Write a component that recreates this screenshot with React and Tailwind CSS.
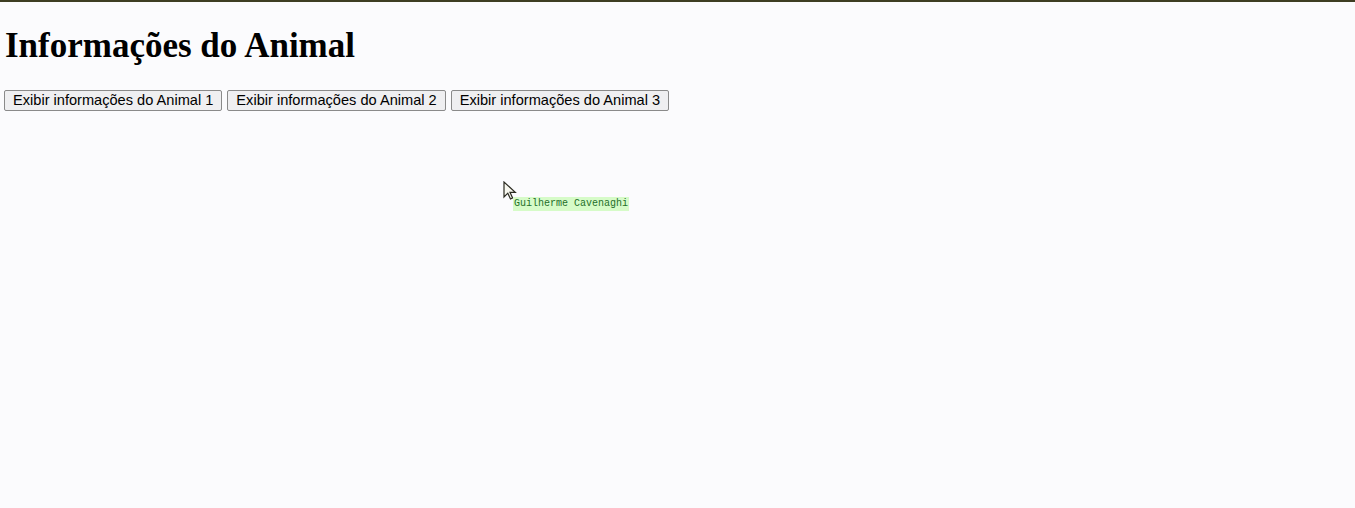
import React from 'react';

const animals = [1, 2, 3];

const Cursor = () => (
    <svg width="14" height="20" viewBox="0 0 14 20" className="absolute left-[503px] top-[179px]">
        <path d="M1 1 L1 16 L4.8 12.2 L7.5 18 L9.6 17 L7 11.3 L12.3 11.3 Z" fill="#f8f8f0" stroke="#2a2a20" strokeWidth="1.2" strokeLinejoin="miter" />
    </svg>
);

const App = () => {
    return (
        <div className="relative w-[1355px] h-[508px] bg-[#fbfbfd] border-t-2 border-[#3d3d22] overflow-hidden font-['Liberation_Serif',serif] text-black">
            <div className="pl-[4px] pt-[22px]">
                <h1 className="text-[35px] leading-[44px] font-bold pl-px">Informações do Animal</h1>
                <div className="flex gap-[5px] mt-[22px]">
                    {animals.map(n => (
                        <button
                            key={n}
                            className="h-[21px] px-[8px] bg-[#efeff1] border border-[#8a8a8a] rounded-[2px] text-[14.6px] leading-none font-['Liberation_Sans',Arial,sans-serif]"
                        >
                            Exibir informações do Animal {n}
                        </button>
                    ))}
                </div>
            </div>
            <Cursor />
            <div className="absolute left-[513px] top-[195px] h-[14px] px-[1px] bg-[#d6fbc8] text-[#1f6f2a] text-[10px] leading-[14px] font-['Liberation_Mono',monospace]">
                Guilherme Cavenaghi
            </div>
        </div>
    );
};

export default App;
